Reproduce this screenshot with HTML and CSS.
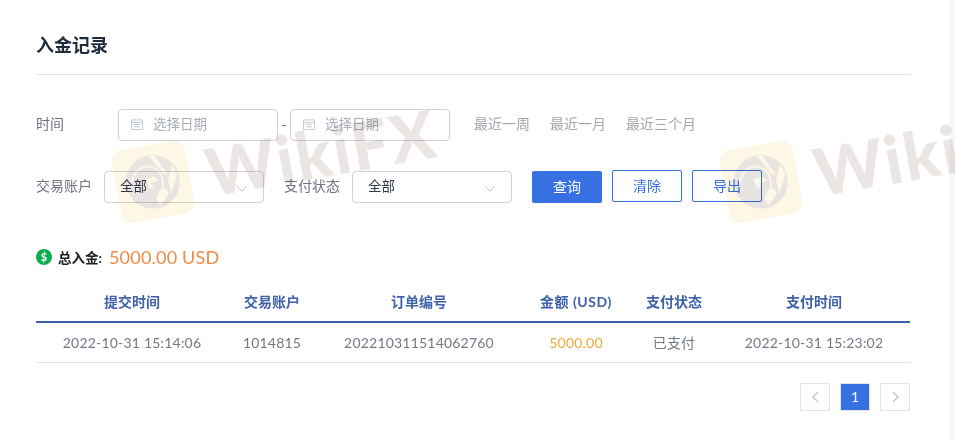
FILE: index.html
```html
<!DOCTYPE html>
<html lang="zh-CN">
  <head>
    <meta charset="UTF-8" />
    <meta name="viewport" content="width=device-width, initial-scale=1.0" />
    <title>入金记录</title>
    <link rel="stylesheet" href="styles.css">
  </head>
  <body>
    <div class="page">
      <div class="content">
        <h2 class="page-title">入金记录</h2>

        <div class="filter-row filter-time">
          <label class="label-time">时间</label>
          <div class="date-input">
            <svg class="icon-date" viewBox="0 0 12 12"><path d="M.5 2h11v9.5H.5zM.5 4.5h11M3 .5V2M9 .5V2M3 6.5h6M3 8.8h6" /></svg>
            <span>选择日期</span>
          </div>
          <span class="date-sep">-</span>
          <div class="date-input">
            <svg class="icon-date" viewBox="0 0 12 12"><path d="M.5 2h11v9.5H.5zM.5 4.5h11M3 .5V2M9 .5V2M3 6.5h6M3 8.8h6" /></svg>
            <span>选择日期</span>
          </div>
          <div class="quick-links">
            <a>最近一周</a>
            <a>最近一月</a>
            <a>最近三个月</a>
          </div>
        </div>

        <div class="filter-row filter-account">
          <label class="label-account">交易账户</label>
          <div class="select-box">
            <span>全部</span>
            <svg class="icon-arrow" viewBox="0 0 12 7"><path d="M1 1l5 5 5-5" /></svg>
          </div>
          <label class="label-status">支付状态</label>
          <div class="select-box">
            <span>全部</span>
            <svg class="icon-arrow" viewBox="0 0 12 7"><path d="M1 1l5 5 5-5" /></svg>
          </div>
          <button type="button" class="btn btn-primary">查询</button>
          <button type="button" class="btn btn-outline">清除</button>
          <button type="button" class="btn btn-outline">导出</button>
        </div>

        <div class="summary">
          <span class="icon-dollar">$</span>
          <span class="summary-label">总入金:</span>
          <span class="summary-value">5000.00 USD</span>
        </div>

        <table class="record-table">
          <thead>
            <tr>
              <th class="col-submit">提交时间</th>
              <th class="col-account">交易账户</th>
              <th class="col-order">订单编号</th>
              <th class="col-amount">金额 (USD)</th>
              <th class="col-status">支付状态</th>
              <th class="col-paid">支付时间</th>
            </tr>
          </thead>
          <tbody>
            <tr>
              <td>2022-10-31 15:14:06</td>
              <td>1014815</td>
              <td>202210311514062760</td>
              <td class="amount">5000.00</td>
              <td>已支付</td>
              <td>2022-10-31 15:23:02</td>
            </tr>
          </tbody>
        </table>

        <div class="pagination">
          <a class="page-btn"><svg viewBox="0 0 7 12"><path d="M6 1L1 6l5 5" /></svg></a>
          <a class="page-btn active">1</a>
          <a class="page-btn"><svg viewBox="0 0 7 12"><path d="M1 1l5 5-5 5" /></svg></a>
        </div>
      </div>

      <!-- watermark -->
      <div class="watermark wm-left">
        <div class="wm-logo">
          <svg viewBox="0 0 54 54">
            <circle cx="27" cy="27" r="27" fill="#e8e4e1" />
            <path d="M27 0L33 1 43 23 38 20z" fill="#fdf7e6" />
            <path d="M48 14L53 22 43 42 42 29z" fill="#fdf7e6" />
            <path d="M6 24C11 11 24 8 31 14c5 4 7 11 5 19" fill="none" stroke="#fdf7e6" stroke-width="2" />
            <path d="M20 23l9-1 5 5-9 1 3 6-6-2z" fill="#fdf7e6" />
            <path d="M36 33L41 41 30 52 27 44z" fill="#fdf7e6" />
          </svg>
        </div>
        <span class="wm-text">WikiFX</span>
      </div>
      <div class="watermark wm-right">
        <div class="wm-logo">
          <svg viewBox="0 0 54 54">
            <circle cx="27" cy="27" r="27" fill="#e8e4e1" />
            <path d="M27 0L33 1 43 23 38 20z" fill="#fdf7e6" />
            <path d="M48 14L53 22 43 42 42 29z" fill="#fdf7e6" />
            <path d="M6 24C11 11 24 8 31 14c5 4 7 11 5 19" fill="none" stroke="#fdf7e6" stroke-width="2" />
            <path d="M20 23l9-1 5 5-9 1 3 6-6-2z" fill="#fdf7e6" />
            <path d="M36 33L41 41 30 52 27 44z" fill="#fdf7e6" />
          </svg>
        </div>
        <span class="wm-text">WikiFX</span>
      </div>

      <div class="scroll-strip"></div>
    </div>
  </body>
</html>
```

FILE: styles.css
```css
* {
  margin: 0;
  padding: 0;
  box-sizing: border-box;
  font-family: "Lato", "Noto Sans CJK SC", sans-serif;
}

html,
body {
  height: 440px;
  overflow: hidden;
  background-color: white;
}

.page {
  position: relative;
  display: flex;
  width: 955px;
  height: 440px;
  overflow: hidden;
}

.content {
  width: 950px;
  padding: 0 40px 0 36px;
}

.scroll-strip {
  width: 5px;
  background-color: #f7f7f7;
}

.page-title {
  height: 75px;
  padding-top: 32px;
  font-size: 18px;
  line-height: 26px;
  font-weight: 700;
  color: #1f2a3c;
  border-bottom: 1px solid #e4e4ea;
}

.filter-row {
  display: flex;
  align-items: center;
  font-size: 14px;
  line-height: 20px;
  color: #6f7480;
}

.filter-row label,
.quick-links {
  margin-bottom: 2px;
}

.filter-time {
  height: 32px;
  margin-top: 34px;
}

.filter-account {
  height: 32px;
  margin-top: 30px;
}

.label-time {
  width: 82px;
}

.label-account {
  width: 68px;
}

.label-status {
  width: 68px;
  margin-left: 20px;
}

.date-input {
  display: flex;
  align-items: center;
  gap: 10px;
  width: 160px;
  height: 32px;
  padding-left: 12px;
  padding-bottom: 2px;
  border: 1px solid #d2d2d6;
  border-radius: 4px;
  color: #a8adb8;
  font-size: 13.5px;
}

.icon-date {
  width: 12px;
  height: 12px;
  fill: none;
  stroke: #c6ccd8;
  stroke-width: 1;
}

.date-sep {
  width: 12px;
  text-align: center;
  color: #666;
}

.quick-links {
  display: flex;
  gap: 20px;
  margin-left: 24px;
  color: #a3a6ad;
  font-size: 14px;
}

.select-box {
  display: flex;
  align-items: center;
  justify-content: space-between;
  width: 160px;
  height: 32px;
  padding: 0 15px 2px;
  border: 1px solid #d2d2d6;
  border-radius: 4px;
  color: #333a4a;
  font-size: 13.5px;
}

.icon-arrow {
  width: 12px;
  height: 7px;
  margin-top: 5px;
  fill: none;
  stroke: #c4c8d0;
  stroke-width: 1;
}

.btn {
  width: 70px;
  height: 32px;
  padding-bottom: 2px;
  border-radius: 2px;
  font-size: 14px;
  cursor: pointer;
}

.btn-primary {
  margin-left: 20px;
  margin-right: 10px;
  border: none;
  background-color: #3770e0;
  color: white;
}

.btn-outline {
  margin-top: -2px;
  margin-right: 10px;
  border: 1px solid #3770e0;
  background-color: transparent;
  color: #3770e0;
}

.summary {
  display: flex;
  align-items: center;
  height: 26px;
  margin-top: 41px;
}

.icon-dollar {
  width: 16px;
  height: 16px;
  border-radius: 50%;
  background-color: #0cab4f;
  color: white;
  font-size: 11px;
  line-height: 16px;
  font-weight: 700;
  text-align: center;
}

.summary-label {
  margin-left: 6px;
  font-size: 13.5px;
  font-weight: 700;
  color: #222;
}

.summary-value {
  margin-left: 7px;
  font-size: 18px;
  letter-spacing: 0.2px;
  color: #f08a45;
}

.record-table {
  width: 874px;
  margin-top: 11px;
  border-collapse: collapse;
  table-layout: fixed;
  font-size: 14px;
}

.record-table th {
  height: 41px;
  font-weight: 700;
  color: #3f61ab;
  border-bottom: 2px solid #3f61ab;
}

.record-table td {
  height: 40px;
  text-align: center;
  letter-spacing: 0.2px;
  color: #727986;
  border-bottom: 1px solid #e4e4ea;
}

.record-table .amount {
  color: #f5a83a;
}

.col-submit {
  width: 192px;
}

.col-account {
  width: 88px;
}

.col-order {
  width: 206px;
}

.record-table .col-amount {
  width: 108px;
  letter-spacing: 0.5px;
}

.col-status {
  width: 88px;
}

.col-paid {
  width: 192px;
}

.pagination {
  display: flex;
  justify-content: flex-end;
  gap: 10px;
  width: 874px;
  margin-top: 20px;
}

.page-btn {
  display: flex;
  align-items: center;
  justify-content: center;
  width: 30px;
  height: 28px;
  border: 1px solid #e4e4ea;
  font-size: 14px;
  color: #c4c8d0;
}

.page-btn svg {
  width: 7px;
  height: 12px;
  fill: none;
  stroke: #c4c8d0;
  stroke-width: 1.5;
}

.page-btn.active {
  background-color: #3770e0;
  color: white;
}

.watermark {
  position: absolute;
  top: 120px;
  display: flex;
  align-items: center;
  gap: 17px;
  transform: rotate(-10deg);
  mix-blend-mode: multiply;
  pointer-events: none;
}

.wm-left {
  left: 114px;
}

.wm-right {
  left: 722px;
}

.wm-logo {
  display: flex;
  align-items: center;
  justify-content: center;
  width: 74px;
  height: 74px;
  border-radius: 10px;
  background-color: #fdf7e6;
}

.wm-logo svg {
  width: 54px;
  height: 54px;
}

.wm-text {
  font-family: "Lato", sans-serif;
  font-size: 66px;
  line-height: 80px;
  font-weight: 900;
  letter-spacing: 2px;
  color: #ebe6e3;
}
```
